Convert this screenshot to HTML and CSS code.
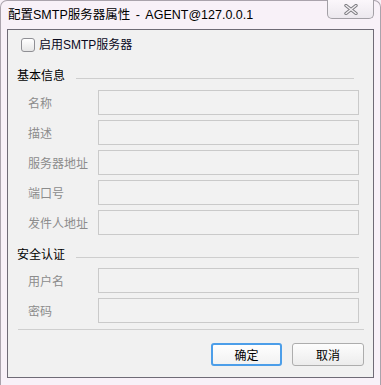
FILE: index.html
```html
<!DOCTYPE html>
<html lang="zh-CN">
  <head>
    <meta charset="UTF-8" />
    <title>配置SMTP服务器属性</title>
    <link rel="stylesheet" href="styles.css">
  </head>
  <body>
    <div class="window">
      <!-- Title bar -->
      <div class="titlebar">
        <span class="title">配置SMTP服务器属性 - AGENT@127.0.0.1</span>
        <div class="close">
          <svg width="14" height="11" viewBox="0 0 14 11">
            <path d="M2 1.5 L12 9.5 M12 1.5 L2 9.5" stroke="#7c7c80" stroke-width="3.4" stroke-linecap="round" />
            <path d="M2 1.5 L12 9.5 M12 1.5 L2 9.5" stroke="#f4f0f4" stroke-width="1.4" stroke-linecap="round" />
          </svg>
        </div>
      </div>

      <!-- Client area -->
      <div class="client">
        <label class="enable">
          <span class="checkbox"></span>
          <span>启用SMTP服务器</span>
        </label>

        <div class="group-head first">
          <span>基本信息</span>
          <div class="rule short"></div>
        </div>
        <div class="rows">
          <div class="row"><span class="label">名称</span><input class="field" disabled /></div>
          <div class="row"><span class="label">描述</span><input class="field" disabled /></div>
          <div class="row"><span class="label">服务器地址</span><input class="field" disabled /></div>
          <div class="row"><span class="label">端口号</span><input class="field" disabled /></div>
          <div class="row"><span class="label">发件人地址</span><input class="field" disabled /></div>
        </div>

        <div class="group-head second">
          <span>安全认证</span>
          <div class="rule"></div>
        </div>
        <div class="rows">
          <div class="row"><span class="label">用户名</span><input class="field" disabled /></div>
          <div class="row"><span class="label">密码</span><input class="field" type="password" disabled /></div>
        </div>

        <div class="separator"></div>

        <div class="buttons">
          <button class="btn default">确定</button>
          <button class="btn">取消</button>
        </div>
      </div>
    </div>
  </body>
</html>
```

FILE: styles.css
```css
/* Reset */
* {
  margin: 0;
  padding: 0;
  box-sizing: border-box;
}
body {
  font-family: "Liberation Sans", "Noto Sans CJK SC", sans-serif;
  font-size: 12px;
  background: #f8f1f8;
}

/* Window frame */
.window {
  width: 381px;
  height: 385px;
  border: 1px solid #aaa3ac;
  border-bottom: none;
  border-radius: 7px 7px 0 0;
  background: #f8f1f8;
}
.titlebar {
  height: 28px;
  display: flex;
  align-items: flex-start;
}
.title {
  padding-left: 7px;
  margin-top: 6px;
  font-size: 12.5px;
  line-height: 16px;
  color: #000;
  white-space: pre;
  word-spacing: 2px;
}
.close {
  margin-left: auto;
  margin-right: 6px;
  margin-top: -1px;
  width: 47px;
  height: 19px;
  border: 1px solid #a3a0a6;
  border-top: none;
  border-radius: 0 0 5px 5px;
  background: linear-gradient(#fbf7fb, #ece8ee);
  display: flex;
  align-items: center;
  justify-content: center;
}

/* Client area */
.client {
  margin-left: 6px;
  width: 367px;
  height: 349px;
  border: 1px solid #6f6b76;
  background: #f1f1f1;
  padding-top: 8px;
}
.enable {
  display: flex;
  align-items: center;
  height: 14px;
  padding-left: 13px;
  color: #0a0a1e;
  line-height: 14px;
}
.checkbox {
  width: 14px;
  height: 14px;
  border: 1px solid #8f8f94;
  border-radius: 3px;
  background: linear-gradient(#ffffff, #e6e6e6);
  margin-right: 4px;
}

/* Group headings */
.group-head {
  display: flex;
  align-items: center;
  height: 20px;
  padding-left: 9px;
  color: #000;
  line-height: 20px;
}
.group-head.first {
  margin-top: 14px;
}
.group-head.second {
  margin-top: 10px;
}
.rule {
  flex: 1;
  height: 1px;
  background: #cecece;
  margin: 4px 14px 0 11px;
}
.rule.short {
  margin-right: 19px;
}

/* Form rows */
.rows {
  display: flex;
  flex-direction: column;
  gap: 5px;
  margin-top: 4px;
}
.group-head.second + .rows {
  margin-top: 3px;
}
.row {
  display: flex;
  align-items: center;
  height: 25px;
  padding-left: 20px;
}
.label {
  width: 70px;
  color: #8c8c8c;
}
.field {
  width: 261px;
  height: 25px;
  border: 1px solid #cacaca;
  background: #f2f2f2;
  outline: none;
}

.separator {
  height: 1px;
  background: #cfcfcf;
  margin: 6px 9px 0 10px;
}

/* Buttons */
.buttons {
  display: flex;
  justify-content: flex-end;
  gap: 10px;
  padding-right: 9px;
  margin-top: 13px;
}
.btn {
  width: 72px;
  height: 23px;
  font-family: "Liberation Sans", "Noto Sans CJK SC", sans-serif;
  font-size: 12px;
  color: #000;
  border: 1px solid #adadad;
  border-radius: 3px;
  background: linear-gradient(#fdfdfd, #ececec);
}
.btn.default {
  width: 71px;
  border: 2px solid #4c9ee9;
  background: linear-gradient(#fefefe, #f2f2f2);
}
```
